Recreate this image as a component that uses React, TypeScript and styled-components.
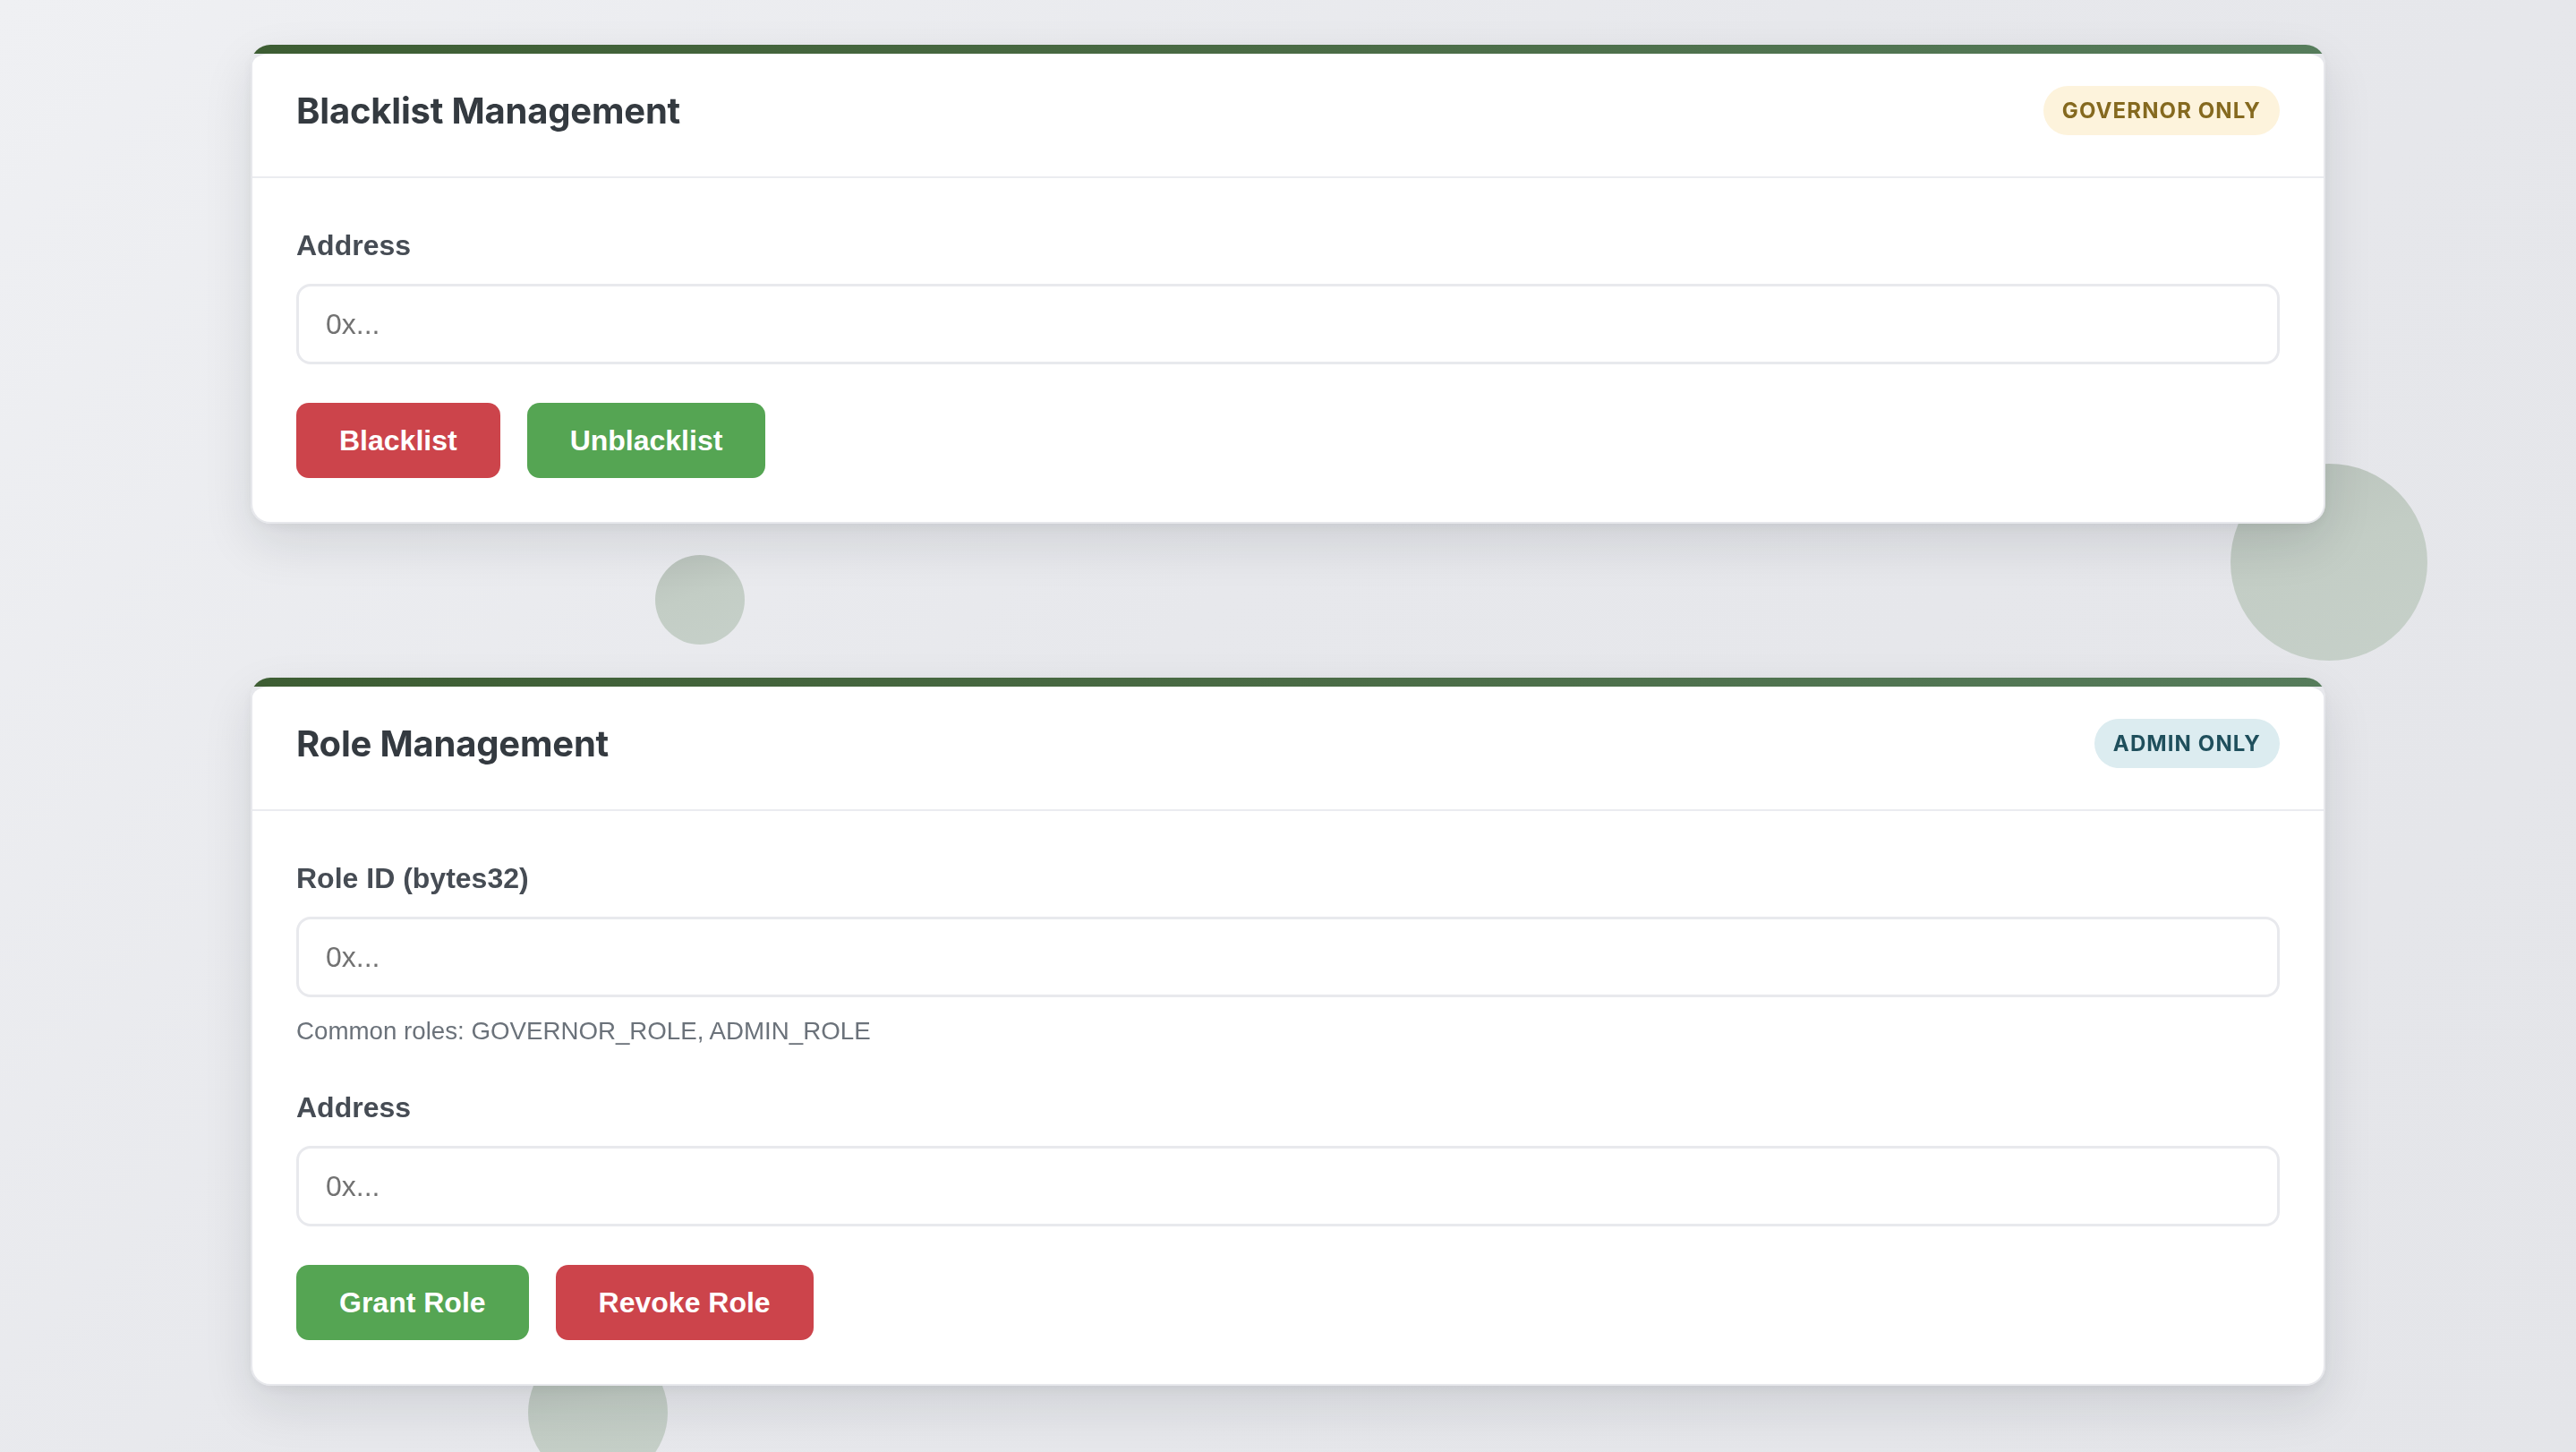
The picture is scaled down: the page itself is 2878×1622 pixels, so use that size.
import styled, { createGlobalStyle } from 'styled-components';

const GlobalStyle = createGlobalStyle`
    html, body {
        margin: 0;
        padding: 0;
        height: 1622px;
        overflow: hidden;
    }
    body {
        background: linear-gradient(135deg, #eff0f3 0%, #e7e8ec 45%, #e4e5e9 100%);
        font-family: "Liberation Sans", Arial, sans-serif;
    }
    * { box-sizing: border-box; }
`;

const Backdrop = styled.div`
    position: fixed;
    inset: 0;
    z-index: 0;
    pointer-events: none;
`;

const Bubble = styled.div<{ $x: number; $y: number; $size: number }>`
    position: absolute;
    left: ${(p) => p.$x - p.$size / 2}px;
    top: ${(p) => p.$y - p.$size / 2}px;
    width: ${(p) => p.$size}px;
    height: ${(p) => p.$size}px;
    border-radius: 50%;
    background: linear-gradient(160deg, #b9c2bb 0%, #c3cdc5 45%, #c6d0c9 100%);
`;

const Page = styled.main`
    position: relative;
    z-index: 1;
    width: 2318px;
    margin: 0 auto;
    display: flex;
    flex-direction: column;
    gap: 172px;
    /* scrolled view: previous card sits above the fold */
    margin-top: -422px;
`;

const Card = styled.section<{ $height?: number }>`
    border: 2px solid transparent;
    border-top-width: 10px;
    border-radius: 22px;
    background:
        linear-gradient(#fff, #fff) padding-box,
        linear-gradient(90deg, #3d5d33 0%, #4a6b45 50%, #567c5b 100%) border-box top / 100% 10px no-repeat,
        linear-gradient(#e7e8ec, #e7e8ec) border-box;
    box-shadow: 0 22px 55px rgba(20, 24, 32, 0.11), 0 4px 14px rgba(20, 24, 32, 0.05);
    ${(p) => (p.$height ? `height: ${p.$height}px;` : '')}
`;

const CardHeader = styled.header`
    display: flex;
    align-items: center;
    justify-content: space-between;
    padding: 36px 49px 46px;
    border-bottom: 2px solid #ebecf0;
`;

const Title = styled.h2`
    margin: 0;
    font-family: Inter, "Liberation Sans", sans-serif;
    font-size: 40px;
    font-weight: 700;
    line-height: 55px;
    color: #343a40;
    letter-spacing: -0.2px;
`;

const Badge = styled.span<{ $tone: 'governor' | 'admin' }>`
    display: inline-flex;
    align-items: center;
    height: 55px;
    padding: 0 21px;
    border-radius: 28px;
    font-family: Inter, "Liberation Sans", sans-serif;
    font-size: 24px;
    font-weight: 700;
    letter-spacing: 1.1px;
    background: ${(p) => (p.$tone === 'governor' ? '#fdf3dc' : '#dcecf0')};
    color: ${(p) => (p.$tone === 'governor' ? '#85691f' : '#1f4f5c')};
`;

const CardBody = styled.div`
    padding: 56px 49px 49px;
`;

const FormGroup = styled.div`
    margin-bottom: 43px;
`;

const Label = styled.label`
    display: block;
    font-size: 32px;
    font-weight: 700;
    line-height: 38px;
    color: #464c54;
    margin-bottom: 24px;
`;

const Input = styled.input`
    display: block;
    width: 100%;
    height: 90px;
    padding: 0 30px;
    border: 3px solid #e8e9ed;
    border-radius: 16px;
    background: #fff;
    font-family: "Liberation Sans", Arial, sans-serif;
    font-size: 32px;
    color: #343a40;
    outline: none;

    &::placeholder {
        color: #727272;
    }
`;

const Hint = styled.small`
    display: block;
    margin-top: 15px;
    font-size: 27.7px;
    line-height: 46px;
    color: #6b727a;
`;

const ButtonRow = styled.div`
    display: flex;
    gap: 30px;
`;

const ActionButton = styled.button<{ $variant: 'danger' | 'success' }>`
    height: 84px;
    padding: 0 48px;
    border: none;
    border-radius: 14px;
    font-family: "Liberation Sans", Arial, sans-serif;
    font-size: 32px;
    font-weight: 700;
    color: #fff;
    cursor: pointer;
    background: ${(p) => (p.$variant === 'danger' ? '#cc444b' : '#55a553')};
`;

const App = () => {
    return (
        <>
            <GlobalStyle />
            <Backdrop>
                <Bubble $x={782} $y={670} $size={100} />
                <Bubble $x={2602} $y={628} $size={220} />
                <Bubble $x={668} $y={1578} $size={156} />
            </Backdrop>

            <Page>
                <Card $height={300} aria-hidden />

                <Card>
                    <CardHeader>
                        <Title>Blacklist Management</Title>
                        <Badge $tone="governor">GOVERNOR ONLY</Badge>
                    </CardHeader>
                    <CardBody>
                        <FormGroup>
                            <Label htmlFor="blacklist-address">Address</Label>
                            <Input id="blacklist-address" placeholder="0x..." />
                        </FormGroup>
                        <ButtonRow>
                            <ActionButton $variant="danger">Blacklist</ActionButton>
                            <ActionButton $variant="success">Unblacklist</ActionButton>
                        </ButtonRow>
                    </CardBody>
                </Card>

                <Card>
                    <CardHeader>
                        <Title>Role Management</Title>
                        <Badge $tone="admin">ADMIN ONLY</Badge>
                    </CardHeader>
                    <CardBody>
                        <FormGroup>
                            <Label htmlFor="role-id">Role ID (bytes32)</Label>
                            <Input id="role-id" placeholder="0x..." />
                            <Hint>Common roles: GOVERNOR_ROLE, ADMIN_ROLE</Hint>
                        </FormGroup>
                        <FormGroup>
                            <Label htmlFor="role-address">Address</Label>
                            <Input id="role-address" placeholder="0x..." />
                        </FormGroup>
                        <ButtonRow>
                            <ActionButton $variant="success">Grant Role</ActionButton>
                            <ActionButton $variant="danger">Revoke Role</ActionButton>
                        </ButtonRow>
                    </CardBody>
                </Card>
            </Page>
        </>
    );
};

export default App;
